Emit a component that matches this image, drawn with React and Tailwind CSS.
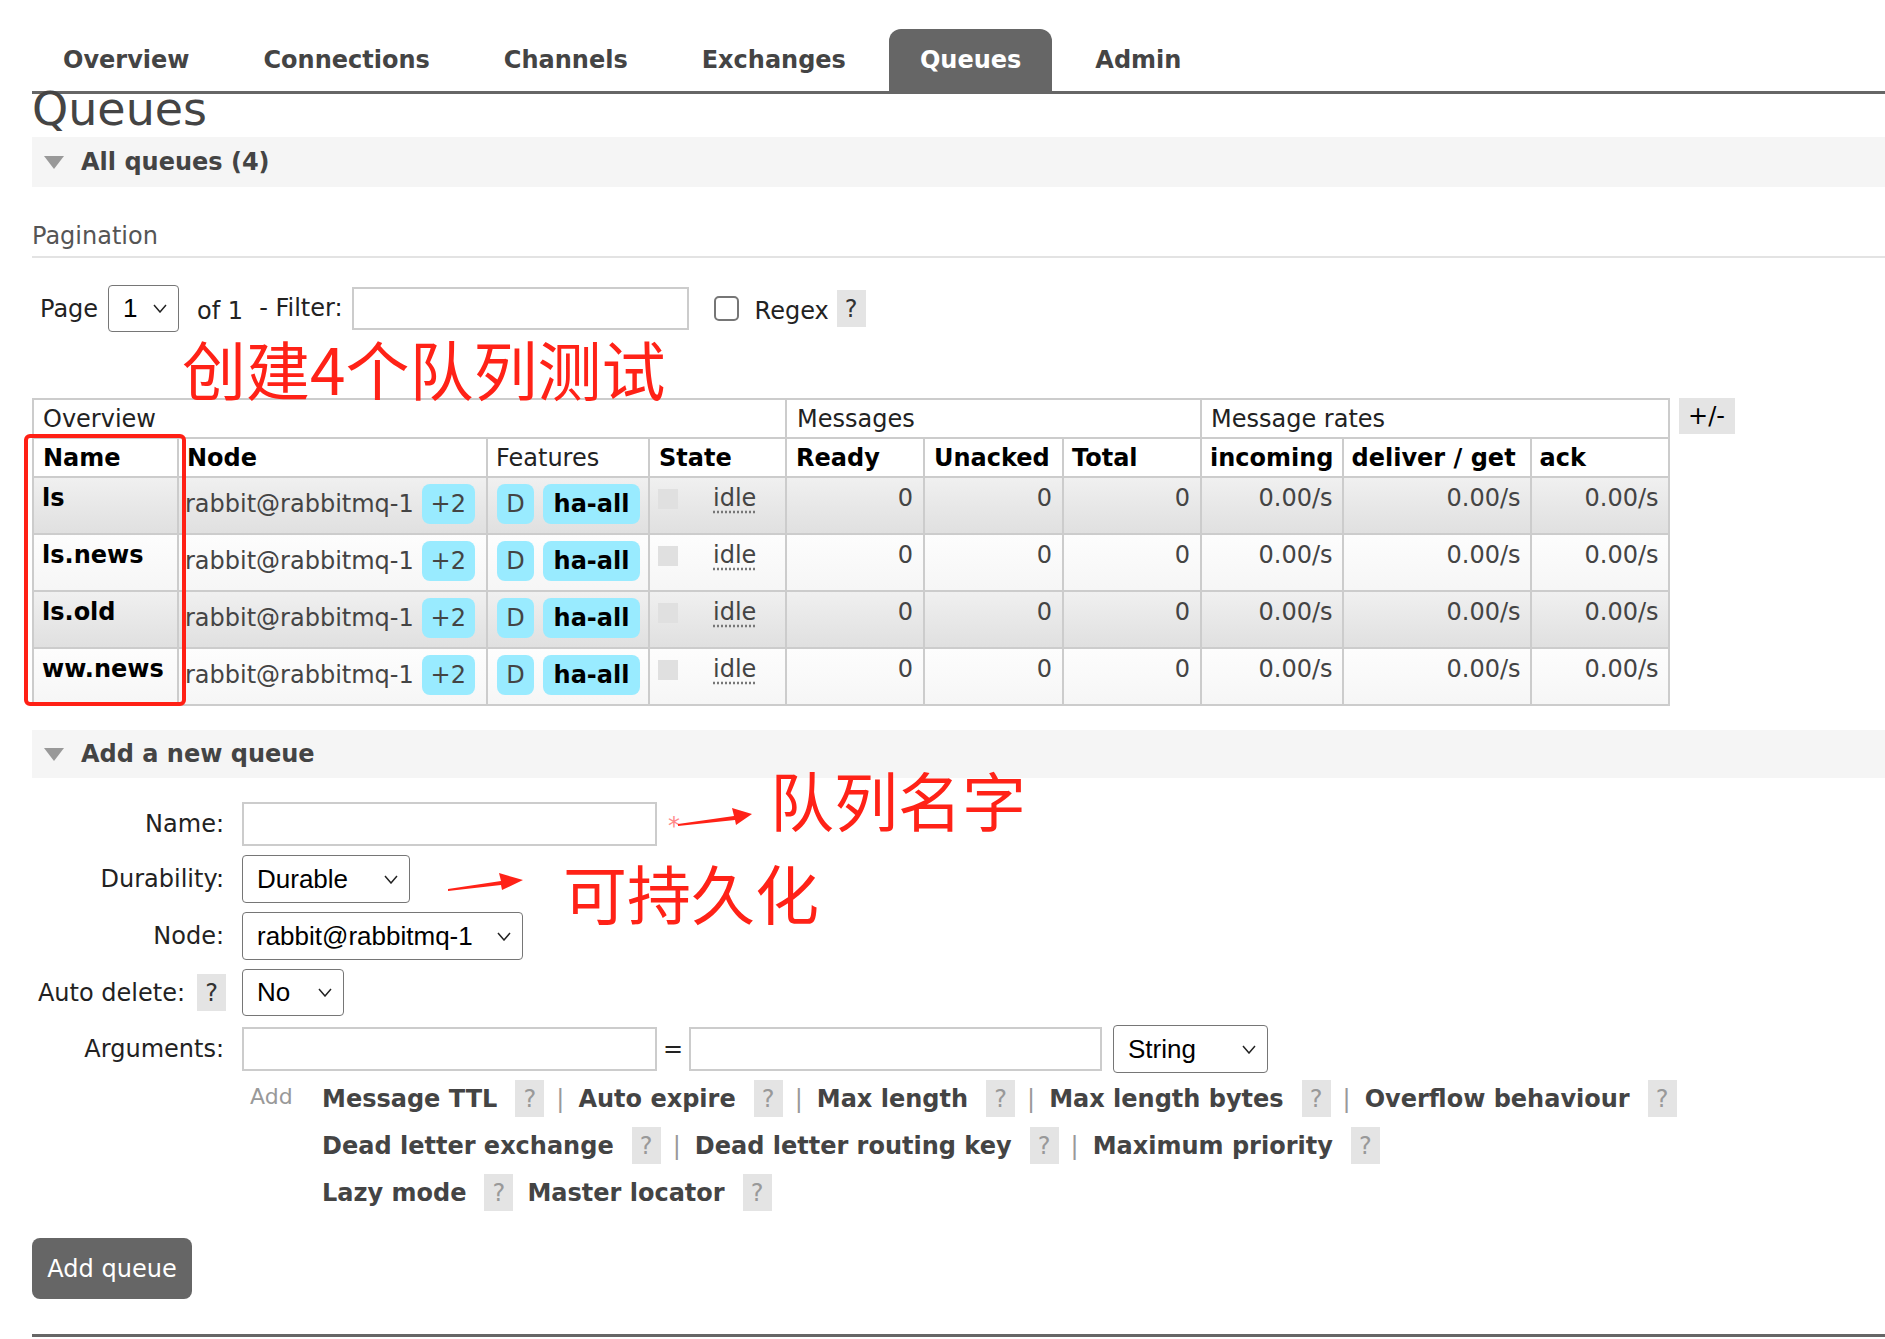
import React from 'react';

const tabs = ['Overview', 'Connections', 'Channels', 'Exchanges', 'Queues', 'Admin'];
const queues = ['ls', 'ls.news', 'ls.old', 'ww.news'];

const Chevron = ({ className }) => (
  <svg viewBox="0 0 14 9" className={className} fill="none" stroke="#222" strokeWidth="1.5">
    <polyline points="1,1 7,8 13,1" />
  </svg>
);

const FakeSelect = ({ value, className }) => (
  <div
    className={`flex items-center justify-between rounded-[4px] border-[1.5px] border-[#767676] bg-white pl-[14px] pr-[11px] font-['Liberation_Sans',Arial,sans-serif] text-[26px] text-black ${className}`}
  >
    <span>{value}</span>
    <Chevron className="w-[14px] h-[9px]" />
  </div>
);

const Help = ({ dark }) => (
  <span
    className={`inline-flex w-[29px] h-[37px] items-center justify-center bg-[#e4e4e4] font-normal text-[24px] ${dark ? 'text-[#333]' : 'text-[#999]'}`}
  >
    ?
  </span>
);

const Pipe = () => <span className="ml-[12px] font-normal text-[#999]">|</span>;

const Arg = ({ label, first }) => (
  <>
    <span className={first ? 'font-bold text-[#444]' : 'ml-[14px] font-bold text-[#444]'}>{label}</span>
    <span className="ml-[18px]"><Help /></span>
  </>
);

const Arrow = ({ className, points }) => (
  <svg className={className} viewBox="0 0 82 26">
    <polygon points={points} fill="#ff2217" />
  </svg>
);

const SectionBand = ({ title, className }) => (
  <div className={`flex items-center bg-[#f5f5f5] pl-[12px] ${className}`}>
    <svg viewBox="0 0 20 13" className="w-[20px] h-[13px]">
      <polygon points="0,0 20,0 10,13" fill="#999" />
    </svg>
    <span className="ml-[17px] font-bold text-[#444]">{title}</span>
  </div>
);

export default function App() {
  const cell = 'border-2 border-[#ccc] align-top pt-[6px]';

  return (
    <div className="relative min-h-[1339px] w-full bg-white pl-[32px] font-['DejaVu_Sans',Verdana,sans-serif] text-[24px] text-[#444]">
      {/* 顶部菜单 */}
      <nav className="flex items-end gap-[12px] border-b-[3px] border-[#666] pt-[29px]">
        {tabs.map((t) => (
          <div
            key={t}
            className={
              t === 'Queues'
                ? 'flex h-[62px] items-center rounded-t-[12px] bg-[#666] px-[31px] font-bold text-white'
                : 'flex h-[62px] items-center px-[31px] font-bold text-[#444]'
            }
          >
            {t}
          </div>
        ))}
      </nav>

      <h1 className="-mt-[8px] text-[46px] leading-[46px] font-normal text-[#444]">Queues</h1>

      <SectionBand title="All queues (4)" className="mt-[5px] h-[50px]" />

      {/* 分页 */}
      <div className="mt-[35px] border-b-2 border-[#e3e3e3] pb-[6px] leading-[28px] text-[#555]">Pagination</div>

      <div className="mt-[27px] flex h-[47px] items-center pl-[8px] text-[#222]">
        <span>Page</span>
        <FakeSelect value="1" className="ml-[10px] w-[71px] h-[47px]" />
        <span className="ml-[18px] mt-[4px]">of 1</span>
        <span className="ml-[16px] -mt-[2px]">- Filter:</span>
        <div className="ml-[9px] w-[337px] h-[43px] border-2 border-[#ccc] bg-white" />
        <div className="ml-[25px] w-[25px] h-[25px] rounded-[5px] border-2 border-[#767676]" />
        <span className="ml-[16px] mt-[4px]">Regex</span>
        <span className="ml-[8px]"><Help dark /></span>
      </div>

      {/* 队列表格 */}
      <div className="mt-[66px] flex items-start">
        <div className="relative">
          <table className="table-fixed border-collapse border-2 border-[#ccc] leading-[28px]">
            <colgroup>
              <col className="w-[145px]" />
              <col className="w-[309px]" />
              <col className="w-[162px]" />
              <col className="w-[137px]" />
              <col className="w-[138px]" />
              <col className="w-[139px]" />
              <col className="w-[138px]" />
              <col className="w-[141px]" />
              <col className="w-[188px]" />
              <col className="w-[138px]" />
            </colgroup>
            <thead>
              <tr className="h-[39px] text-[#222]">
                <th colSpan={4} className="border-2 border-[#ccc] px-[9px] text-left font-normal">Overview</th>
                <th colSpan={3} className="border-2 border-[#ccc] px-[10px] text-left font-normal">Messages</th>
                <th colSpan={3} className="border-2 border-[#ccc] px-[9px] text-left font-normal">Message rates</th>
              </tr>
              <tr className="h-[39px] text-black">
                <th className="border-2 border-[#ccc] px-[9px] text-left font-bold">Name</th>
                <th className="border-2 border-[#ccc] px-[8px] text-left font-bold">Node</th>
                <th className="border-2 border-[#ccc] px-[8px] text-left font-normal text-[#222]">Features</th>
                <th className="border-2 border-[#ccc] px-[9px] text-left font-bold">State</th>
                <th className="border-2 border-[#ccc] px-[9px] text-left font-bold">Ready</th>
                <th className="border-2 border-[#ccc] px-[9px] text-left font-bold">Unacked</th>
                <th className="border-2 border-[#ccc] px-[8px] text-left font-bold">Total</th>
                <th className="border-2 border-[#ccc] px-[8px] text-left font-bold">incoming</th>
                <th className="border-2 border-[#ccc] px-[8px] text-left font-bold">deliver / get</th>
                <th className="border-2 border-[#ccc] px-[8px] text-left font-bold">ack</th>
              </tr>
            </thead>
            <tbody>
              {queues.map((q, i) => {
                const bg = i % 2 === 0 ? 'bg-gradient-to-b from-[#f0f0f0] to-[#e0e0e0]' : 'bg-gradient-to-b from-[#fdfdfd] to-[#f6f6f6]';
                return (
                  <tr key={q} className="h-[57px]">
                    <td className={`${cell} ${bg} px-[8px] font-bold text-black`}>{q}</td>
                    <td className={`${cell} ${bg} pl-[6px]`}>
                      <div className="flex items-center">
                        <span>rabbit@rabbitmq-1</span>
                        <span className="ml-[8px] flex w-[53px] h-[40px] items-center justify-center rounded-[8px] bg-[#99ebff]">+2</span>
                      </div>
                    </td>
                    <td className={`${cell} ${bg} pl-[9px]`}>
                      <div className="flex gap-[9px]">
                        <span className="flex w-[37px] h-[40px] items-center justify-center rounded-[8px] bg-[#99ebff]">D</span>
                        <span className="flex w-[97px] h-[40px] items-center justify-center rounded-[8px] bg-[#99ebff] font-bold text-black">ha-all</span>
                      </div>
                    </td>
                    <td className={`${cell} ${bg} pl-[8px]`}>
                      <div className="flex items-start">
                        <span className="mt-[5px] w-[20px] h-[20px] bg-[#e0e0e0]" />
                        <span className="ml-[35px] underline decoration-dotted decoration-[#777] underline-offset-[5px]">idle</span>
                      </div>
                    </td>
                    <td className={`${cell} ${bg} pr-[10px] text-right`}>0</td>
                    <td className={`${cell} ${bg} pr-[10px] text-right`}>0</td>
                    <td className={`${cell} ${bg} pr-[10px] text-right`}>0</td>
                    <td className={`${cell} ${bg} pr-[9px] text-right`}>0.00/s</td>
                    <td className={`${cell} ${bg} pr-[9px] text-right`}>0.00/s</td>
                    <td className={`${cell} ${bg} pr-[9px] text-right`}>0.00/s</td>
                  </tr>
                );
              })}
            </tbody>
          </table>
          {/* 红框标注 */}
          <div className="absolute left-[-8px] top-[36px] w-[162px] h-[272px] rounded-[6px] border-[4px] border-[#ff2015]" />
        </div>
        <div className="ml-[9px] flex w-[56px] h-[36px] items-center justify-center bg-[#e4e4e4] text-black">+/-</div>
      </div>

      {/* 新建队列 */}
      <SectionBand title="Add a new queue" className="mt-[24px] h-[48px]" />

      <div className="mt-[24px] grid grid-cols-[192px_1fr] items-center gap-x-[18px] gap-y-[9px] text-[#222]">
        <div className="text-right">Name:</div>
        <div className="flex items-center">
          <div className="w-[415px] h-[44px] border-2 border-[#ccc]" />
          <span className="ml-[11px] mt-[4px] text-[24px] text-[#f88]">*</span>
        </div>

        <div className="text-right">Durability:</div>
        <FakeSelect value="Durable" className="w-[168px] h-[48px]" />

        <div className="text-right">Node:</div>
        <FakeSelect value="rabbit@rabbitmq-1" className="w-[281px] h-[48px]" />

        <div className="flex items-center justify-end">
          <span>Auto delete:</span>
          <span className="ml-[12px] -mr-[2px]"><Help dark /></span>
        </div>
        <FakeSelect value="No" className="w-[102px] h-[47px]" />

        <div className="text-right">Arguments:</div>
        <div className="flex items-center">
          <div className="w-[415px] h-[44px] border-2 border-[#ccc]" />
          <span className="w-[32px] text-center">=</span>
          <div className="w-[413px] h-[44px] border-2 border-[#ccc]" />
          <FakeSelect value="String" className="ml-[11px] w-[155px] h-[48px]" />
        </div>

        <div />
        <div className="-mt-[2px] flex items-start">
          <span className="ml-[8px] w-[72px] text-[22px] text-[#999]">Add</span>
          <div className="flex flex-col gap-[10px]">
            <div className="flex h-[37px] items-center">
              <Arg label="Message TTL" first /><Pipe />
              <Arg label="Auto expire" /><Pipe />
              <Arg label="Max length" /><Pipe />
              <Arg label="Max length bytes" /><Pipe />
              <Arg label="Overflow behaviour" />
            </div>
            <div className="flex h-[37px] items-center">
              <Arg label="Dead letter exchange" first /><Pipe />
              <Arg label="Dead letter routing key" /><Pipe />
              <Arg label="Maximum priority" />
            </div>
            <div className="flex h-[37px] items-center">
              <Arg label="Lazy mode" first />
              <Arg label="Master locator" />
            </div>
          </div>
        </div>
      </div>

      <button className="mt-[27px] flex w-[160px] h-[61px] items-center justify-center rounded-[8px] bg-[#666] text-[24px] text-white">
        Add queue
      </button>

      <div className="mt-[35px] border-t-[3px] border-[#666]" />

      {/* 红色标注 */}
      <div className="absolute left-[182px] top-[335px] font-['Noto_Sans_CJK_SC',sans-serif] text-[64px] leading-none text-[#ff2217]">创建4个队列测试</div>
      <div className="absolute left-[770px] top-[766px] font-['Noto_Sans_CJK_SC',sans-serif] text-[64px] leading-none text-[#ff2217]">队列名字</div>
      <div className="absolute left-[563px] top-[859px] font-['Noto_Sans_CJK_SC',sans-serif] text-[64px] leading-none text-[#ff2217]">可持久化</div>
      <Arrow className="absolute left-[676px] top-[804px] w-[82px] h-[26px]" points="2,20 58,12 56,4 76,10 60,21 59,16 2,22" />
      <Arrow className="absolute left-[444px] top-[867px] w-[82px] h-[26px]" points="4,22 57,14 55,6 79,13 58,23 57,18 4,24" />
    </div>
  );
}
